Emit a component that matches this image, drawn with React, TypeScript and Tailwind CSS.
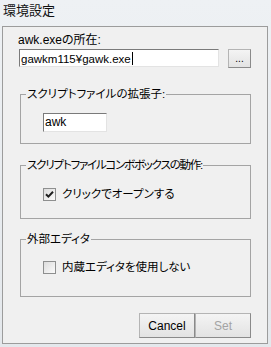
import React from "react";

const font = "font-['Liberation_Sans','Noto_Sans_CJK_JP',sans-serif] [font-feature-settings:'palt']";

function CheckBox({ checked }: { checked?: boolean }) {
  return (
    <span className="flex h-[13px] w-[13px] shrink-0 items-center justify-center border border-[#8e8f8f] bg-gradient-to-br from-[#dcdcdc] to-[#fbfbfb]">
      {checked && (
        <svg width="9" height="9" viewBox="0 0 9 9">
          <path d="M1 4.2 L3.4 6.6 L8 1.8" fill="none" stroke="#1f1f1f" strokeWidth="2" />
        </svg>
      )}
    </span>
  );
}

function Group({
  title,
  children,
  className,
  legendClass,
}: {
  title: string;
  children: React.ReactNode;
  className?: string;
  legendClass?: string;
}) {
  return (
    <fieldset className={`ml-[17px] mr-[16px] border border-[#a4a4a4] ${className ?? ""}`}>
      <legend className={`ml-[5px] whitespace-nowrap px-[1px] text-[11.5px] leading-[14px] text-black ${legendClass ?? ""}`}>
        {title}
      </legend>
      <div className="pl-[22px]">{children}</div>
    </fieldset>
  );
}

function Btn({ label, disabled }: { label: string; disabled?: boolean }) {
  return (
    <button
      className={`h-[25px] w-[56px] border border-[#b4b4b4] border-b-[#8a8a8a] border-r-[#8a8a8a] bg-gradient-to-b from-[#f4f4f4] to-[#e3e3e3] text-[12px] ${
        disabled ? "text-[#a3a3a3]" : "text-black"
      }`}
    >
      {label}
    </button>
  );
}

export default function App() {
  return (
    <div className={`flex h-[347px] w-[271px] flex-col overflow-hidden bg-gradient-to-b from-[#eef1f4] to-[#e4e8ec] ${font}`}>
      <div className="h-[26px] pl-[3px] pt-[3px] text-[13px] leading-[15px] text-[#111]">環境設定</div>

      <div className="ml-[2px] mr-[3px] flex h-[318px] flex-col border border-[#9c9c9c] bg-[#f0f0f0]">
        <div className="pl-[15px] pt-[6px] text-[12px] leading-[14px] text-black">awk.exeの所在:</div>
        <div className="mt-[2px] flex items-start pl-[16px]">
          <div className="h-[18px] w-[200px] border border-[#7a7a7a] border-b-[#e3e3e3] border-r-[#e3e3e3] bg-white pl-[1px] text-[11.5px] leading-[15px] text-black">
            gawkm115¥gawk.exe<span className="ml-[1px] inline-block h-[13px] w-[1px] translate-y-[2px] bg-black" />
          </div>
          <button className="ml-[9px] flex h-[19px] w-[23px] items-end justify-center border border-[#b4b4b4] border-b-[#8a8a8a] border-r-[#8a8a8a] bg-gradient-to-b from-[#f4f4f4] to-[#e3e3e3] pb-[3px] text-[10px] leading-[10px] text-black">
            ...
          </button>
        </div>

        <Group title="スクリプトファイルの拡張子:" className="mt-[19px] pb-[11px]">
          <div className="mt-[12px] h-[19px] w-[64px] border border-[#7a7a7a] border-b-[#e3e3e3] border-r-[#e3e3e3] bg-white pl-[1px] text-[12px] leading-[16px] text-black">
            awk
          </div>
        </Group>

        <Group
          title="スクリプトファイルコンボボックスの動作:"
          className="mt-[14px] pb-[17px]"
          legendClass="tracking-[-1.2px]"
        >
          <div className="mt-[15px] flex h-[14px] items-center gap-[6px] text-[11.5px] leading-[14px] text-black">
            <CheckBox checked />
            <span>クリックでオープンする</span>
          </div>
        </Group>

        <Group title="外部エディタ" className="mt-[13px] pb-[22px]">
          <div className="mt-[14px] flex h-[14px] items-center gap-[6px] text-[11.5px] leading-[14px] text-black">
            <CheckBox />
            <span>内蔵エディタを使用しない</span>
          </div>
        </Group>

        <div className="mt-[16px] flex justify-end pr-[16px]">
          <Btn label="Cancel" />
          <Btn label="Set" disabled />
        </div>
      </div>
    </div>
  );
}
